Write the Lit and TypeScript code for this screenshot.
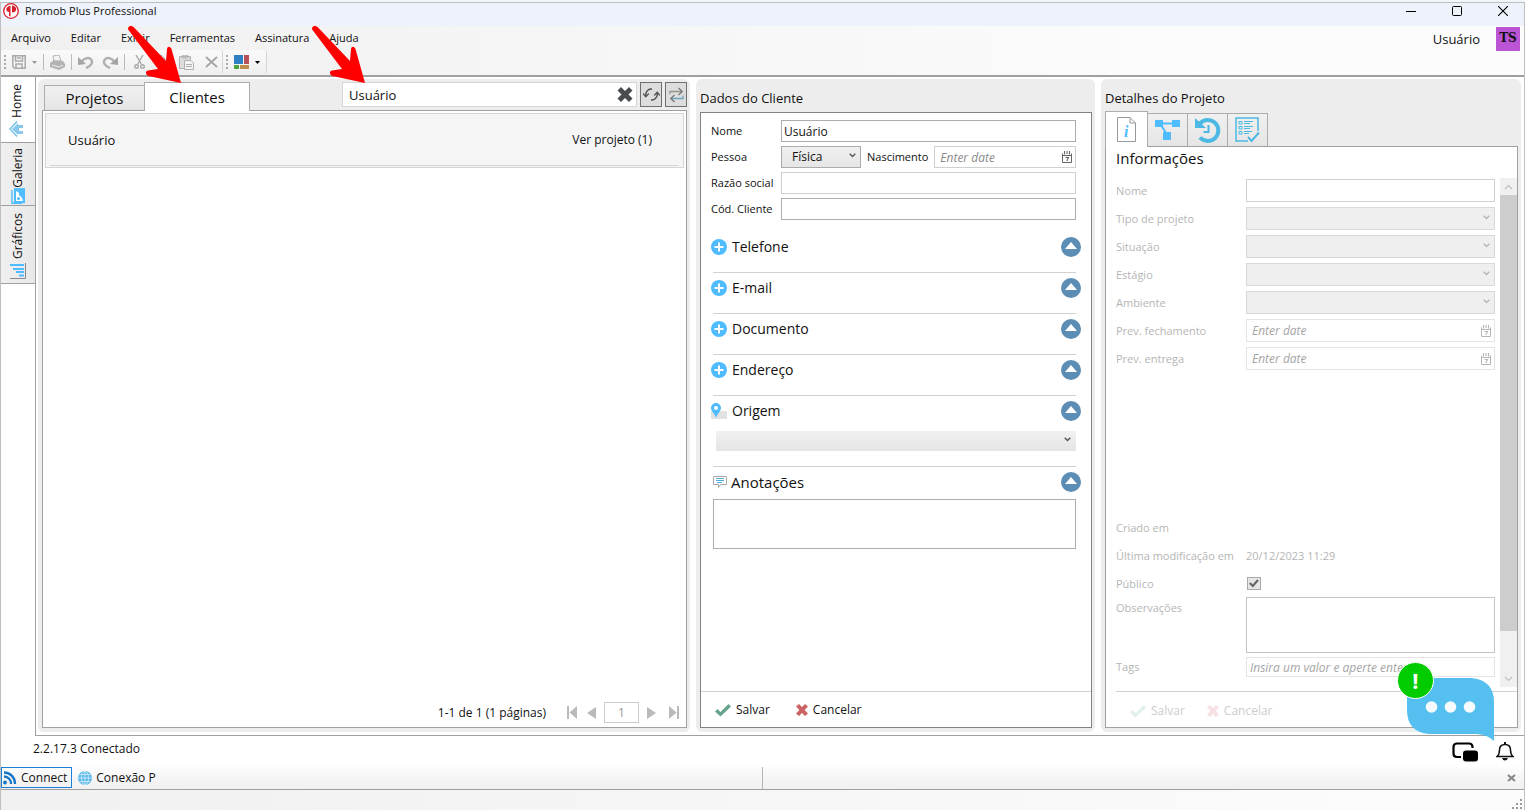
import { LitElement, html, css } from "lit";
import { customElement } from "lit/decorators.js";

const chevron = html`<svg class="chevron" width="7" height="5" viewBox="0 0 7 5"><path d="M.7.8 3.5 3.6 6.3.8" fill="none" stroke="currentColor" stroke-width="1.4"/></svg>`;

const calendar = html`<svg class="calendar" width="10" height="12" viewBox="0 0 10 12" fill="none" stroke="currentColor">
  <path d="M.5 2.5V11.5H9.5V2.5M.5 4.5H9.5" stroke-width="1"/><path d="M2.5 0V3.5M5 0V3M7.5 0V3.5M3.5 6.5H6.5L4.8 10" stroke-width="1.1"/></svg>`;

const check = (color: string) => html`<svg width="16" height="14" viewBox="0 0 16 14"><path d="M0 8.5 2.5 6 5.5 9 13.5 1 16 3.5 5.5 13.5Z" fill=${color}/></svg>`;
const cross = (color: string) => html`<svg width="12" height="12" viewBox="0 0 12 12"><path d="M3 0 6 3 9 0 12 2.5 8.6 6 12 9.5 9 12 6 9 3 12 0 9.5 3.4 6 0 2.5Z" fill=${color}/></svg>`;

const sharedStyles = css`
  * { box-sizing: border-box; }
  button, input, textarea, select { font: inherit; color: inherit; margin: 0; border-radius: 0; outline: none; }
  button { border: 0; padding: 0; background: none; display: flex; align-items: center; }
  svg { display: block; flex: none; }
  .field { border: 1px solid #abadb3; background: #fff; height: 22px; width: 100%; min-width: 0; padding: 0 2px; }
  .pale { border-color: #d0d0d0; }
  .overlay { display: grid; align-items: center; min-width: 0; }
  .overlay > * { grid-area: 1 / 1; }
  .overlay > svg { justify-self: end; pointer-events: none; }
  .chevron { margin: 0 5px 3px 0; color: #555; }
  .calendar { margin-right: 4px; color: #666; }
  .date { font-style: italic; padding-left: 5px; }
  ::placeholder { color: #8a8a8a; opacity: 1; }
  .select { appearance: none; border: 1px solid #acacac; height: 22px; width: 100%; padding: 0 10px; background: linear-gradient(#f0f0f0, #e5e5e5); opacity: 1; }
  .frame { border: 1px solid #a0a0a0; background: #fff; flex: 1; min-height: 0; display: flex; flex-direction: column; }
  .title { margin: 0; font-size: 13px; font-weight: 400; line-height: 18px; }
  .actions { display: flex; align-items: center; height: 36px; flex: none; }
  .actions button { gap: 5px; }
  :host { min-width: 0; min-height: 0; display: flex; flex-direction: column; background: #ededed; border-radius: 6px; }
`;

@customElement("clients-panel")
class ClientsPanel extends LitElement {
  static styles = [sharedStyles, css`
    :host { padding: 3px 3px 4px 4px; }
    .top { display: flex; align-items: flex-end; padding-left: 2px; }
    .tab { border: 1px solid #acacac; border-bottom: 0; font-size: 15px; justify-content: center; height: 25px; width: 101px; background: linear-gradient(#f0f0f0, #e5e5e5); }
    .tab.active { background: #fff; height: 29px; width: 106px; margin: 0 0 -1px -1px; position: relative; }
    .search { flex: 1; max-width: 295px; margin-left: auto; margin-bottom: 3px; }
    .search input { height: 25px; border: 1px solid #d5d5d5; background: #fff; padding: 0 6px; font-size: 13px; width: 100%; }
    .search button { justify-self: end; margin-right: 4px; }
    .square { width: 22px; height: 25px; border: 1px solid #707070; background: #ddd; justify-content: center; margin: 0 0 3px 3px; }
    .client { margin: 2px; height: 55px; border: 1px solid #d5d5d5; background: #f5f5f5; padding: 0 4px 1px; display: flex; }
    .inner { flex: 1; display: flex; align-items: center; justify-content: space-between; border-bottom: 1px solid #d5d5d5; padding: 0 27px 0 18px; }
    .name { font-size: 13px; }
    .pager { margin-top: auto; height: 29px; display: flex; align-items: center; justify-content: flex-end; padding-right: 7px; }
    .pager svg { fill: #b8babc; }
    .first { margin-left: 21px; }
    .prev { margin-left: 10px; }
    .page { width: 35px; height: 21px; border: 1px solid #ccc; text-align: center; color: #999; margin: 0 8px; }
    .last { margin-left: 13px; }
  `];
  render() {
    return html`
      <div class="top">
        <button class="tab">Projetos</button><button class="tab active">Clientes</button>
        <div class="search overlay">
          <input aria-label="Buscar cliente" value="Usuário">
          <button aria-label="Limpar"><svg width="16" height="15" viewBox="0 0 16 15"><path d="M4 0 8 4 12 0 15.5 3.5 11.5 7.5 15.5 11.5 12 15 8 11 4 15 .5 11.5 4.5 7.5.5 3.5Z" fill="#4a4d50"/></svg></button>
        </div>
        <button class="square" aria-label="Atualizar"><svg width="17" height="15" viewBox="0 0 17 15" fill="none" stroke="#505050" stroke-width="1.5"><path d="M2.8 9V7A5.3 5.3 0 0 1 9 2.2M14.2 6V8A5.3 5.3 0 0 1 8 12.8"/><path d="M0 6.5 2.8 9.8 5.8 6.5M11.2 8.5 14.2 5.2 17 8.5" stroke-width="1.2"/></svg></button>
        <button class="square" aria-label="Alternar"><svg width="15" height="16" viewBox="0 0 15 16" fill="none" stroke-width="1.3"><path d="M1 7V4.5H13" stroke="#9a958a"/><path d="M9.5 1 13.2 4.5 9.5 8" stroke="#777"/><path d="M14 8.5V11.5H2" stroke="#6fa3c4"/><path d="M5.5 8 1.8 11.5 5.5 15" stroke="#777"/></svg></button>
      </div>
      <div class="frame">
        <div class="client"><div class="inner"><span class="name">Usuário</span><button>Ver projeto (1)</button></div></div>
        <div class="pager">
          <span>1-1 de 1 (1 páginas)</span>
          <button class="first" aria-label="Primeira"><svg width="10" height="13"><path d="M0 0H2V13H0ZM10 0V13L2.5 6.5Z"/></svg></button>
          <button class="prev" aria-label="Anterior"><svg width="9" height="12"><path d="M9 0V12L0 6Z"/></svg></button>
          <input class="page" aria-label="Página" value="1">
          <button aria-label="Próxima"><svg width="9" height="12"><path d="M0 0V12L9 6Z"/></svg></button>
          <button class="last" aria-label="Última"><svg width="10" height="13"><path d="M8 0H10V13H8ZM0 0V13L7.5 6.5Z"/></svg></button>
        </div>
      </div>`;
  }
}

@customElement("client-form")
class ClientForm extends LitElement {
  static styles = [sharedStyles, css`
    :host { padding: 10px 3px 4px 4px; }
    .frame { margin-top: 5px; border-color: #828282; }
    .form { padding: 7px 15px 0 10px; display: grid; grid-template-columns: 70px 1fr; row-gap: 4px; align-items: center; }
    .form label { white-space: nowrap; font-size: 11px; line-height: 18px; }
    .line { display: grid; grid-template-columns: 80px auto 1fr; align-items: center; column-gap: 6px; }
    .sections { padding-top: 17px; flex: 1; }
    .head { display: flex; align-items: center; gap: 5px; height: 20px; margin: 0 10px; font-size: 14px; }
    .head .label { flex: 1; }
    .rule { border: 0; border-top: 1px solid #d0d0d0; margin: 15px 15px 5px 12px; }
    .origin { margin: 10px 15px 0; }
    .origin .select { height: 20px; border: 0; }
    .notes { font-size: 15px; margin-left: 12px; gap: 4px; }
    .area { display: block; resize: none; height: 50px; border: 1px solid #abadb3; width: calc(100% - 27px); margin: 7px 15px 0 12px; }
    .actions { border-top: 1px solid #d0d0d0; padding-left: 14px; gap: 26px; }
  `];
  private collapse = html`<button aria-label="Recolher"><svg width="20" height="20"><circle cx="10" cy="10" r="10" fill="#5b8db5"/><path d="M10 5 16 12H4Z" fill="#fff"/></svg></button>`;
  private plus = html`<svg width="16" height="16"><circle cx="8" cy="8" r="8" fill="#4ebcff"/><path d="M8 3.5V12.5M3.5 8H12.5" stroke="#fff" stroke-width="2"/></svg>`;
  render() {
    return html`
      <h2 class="title">Dados do Cliente</h2>
      <div class="frame">
        <div class="form">
          <label for="name">Nome</label><input id="name" class="field" value="Usuário">
          <label for="person">Pessoa</label>
          <div class="line">
            <div class="overlay"><select id="person" class="select"><option>Física</option></select>${chevron}</div>
            <label for="birth">Nascimento</label>
            <div class="overlay"><input id="birth" class="field pale date" placeholder="Enter date">${calendar}</div>
          </div>
          <label for="company">Razão social</label><input id="company" class="field pale">
          <label for="code">Cód. Cliente</label><input id="code" class="field">
        </div>
        <div class="sections">
          ${["Telefone", "E-mail", "Documento", "Endereço"].map((name) => html`
            <div class="head">${this.plus}<span class="label">${name}</span>${this.collapse}</div>
            <hr class="rule">`)}
          <div class="head">
            <svg width="16" height="16"><path d="M0 8H16V16H0Z" fill="#e2e2e2"/><path d="M5 15C4 11 0 8 0 5A5 5 0 0 1 10 5C10 8 6 11 5 15Z" fill="#4ebcff"/><circle cx="5" cy="5" r="2" fill="#fff"/></svg>
            <label class="label" for="origin">Origem</label>${this.collapse}
          </div>
          <div class="origin overlay"><select id="origin" class="select"></select>${chevron}</div>
          <hr class="rule">
          <div class="head notes">
            <svg width="14" height="12" fill="none"><path d="M.5.5H13.5V8.5H7.5L5.5 11.5V8.5H.5Z" stroke="#aaa"/><path d="M3 2.5H11M3 4.5H11M4 6.5H9" stroke="#4eaee6"/></svg>
            <label class="label" for="notes">Anotações</label>${this.collapse}
          </div>
          <textarea id="notes" class="area"></textarea>
        </div>
        <div class="actions">
          <button>${check("#65a48a")}Salvar</button>
          <button>${cross("#cc6464")}Cancelar</button>
        </div>
      </div>`;
  }
}

@customElement("project-details")
class ProjectDetails extends LitElement {
  static styles = [sharedStyles, css`
    :host { padding: 10px 3px 4px 4px; }
    .tabs { display: flex; align-items: flex-end; margin-top: 4px; }
    .tab { width: 41px; height: 33px; margin-left: -1px; justify-content: center; border: 1px solid #acacac; border-bottom: 0; background: linear-gradient(#f0f0f0, #e5e5e5); }
    .tab.active { width: 43px; height: 36px; background: #fff; margin: 0 0 -1px; position: relative; }
    .glyph { font: italic bold 16px "Liberation Serif", serif; fill: #4ebcff; }
    .heading { font-size: 15px; font-weight: 400; line-height: 20px; margin: 1px 0 10px 10px; }
    .body { flex: 1; min-height: 0; display: flex; overflow: hidden; margin-bottom: 4px; }
    .fields { flex: 1; min-width: 0; padding: 1px 5px 0 10px; display: flex; flex-direction: column; gap: 5px; color: #b5b5b5; }
    .row { display: grid; grid-template-columns: 130px 1fr; align-items: center; height: 23px; flex: none; }
    .row label, .row span { font-size: 11px; line-height: 18px; }
    .row .field, .row .select { height: 23px; border-color: #d0d0d0; color: #b9b9b9; }
    .row .select { background: #efefef; border-color: #d9d9d9; }
    .row .date { border-color: #e4e4e4; }
    .row ::placeholder { color: #a5a5a5; }
    .row .chevron, .row .calendar { color: #b5b5b5; }
    .later { margin-top: auto; }
    .tall { height: 56px; align-items: start; margin-top: -3px; }
    .tall label { padding-top: 2px; }
    .tall textarea { height: 56px; width: 100%; resize: none; border: 1px solid #c4c4c4; background: #fff; }
    .tags { height: 20px; margin: -1px 0 10px; }
    .row.tags .field { height: 20px; border-color: #e4e4e4; font-style: italic; padding-left: 3px; }
    .box { appearance: none; width: 14px; height: 13px; border: 1px solid #aaa; background: #e6e6e6; margin: 0; }
    .check { margin-left: 1px; display: grid; align-items: center; justify-content: start; }
    .check > * { grid-area: 1 / 1; }
    .check svg { margin-left: 2px; pointer-events: none; }
    .scroll { width: 17px; background: #f0f0f0; display: flex; flex-direction: column; align-items: center; }
    .scroll button { height: 17px; color: #c0c0c0; }
    .thumb { width: 100%; flex: 1; background: #cdcdcd; margin-bottom: 39px; }
    .actions { border-top: 1px solid #d0d0d0; margin-left: 10px; padding: 2px 0 0 14px; gap: 22px; color: #cdcdcd; }
  `];
  private choice(id: string, label: string) {
    return html`<div class="row"><label for=${id}>${label}</label><div class="overlay"><select id=${id} class="select" disabled></select>${chevron}</div></div>`;
  }
  private date(id: string, label: string) {
    return html`<div class="row"><label for=${id}>${label}</label><div class="overlay"><input id=${id} class="field date" placeholder="Enter date" disabled>${calendar}</div></div>`;
  }
  render() {
    const arrow = (d: string) => html`<svg width="9" height="6" viewBox="0 0 9 6"><path d=${d} fill="none" stroke="currentColor" stroke-width="1.2"/></svg>`;
    return html`
      <h2 class="title">Detalhes do Projeto</h2>
      <div class="tabs">
        <button class="tab active" aria-label="Informações"><svg width="19" height="25" fill="none"><path d="M.5.5H13L18.5 6V24.5H.5ZM13 .5V6H18.5" stroke="#999"/><text class="glyph" x="7" y="20">i</text></svg></button>
        <button class="tab" aria-label="Ambientes"><svg width="25" height="20"><path d="M0 0H8V7H0ZM17 0H25V7H17ZM8 12H16V20H8Z" fill="#4ebcff"/><path d="M7 3.5H18M6 5 11 13" stroke="#4ebcff" stroke-width="2"/></svg></button>
        <button class="tab" aria-label="Histórico"><svg width="26" height="26" viewBox="0 0 26 26" fill="none"><path d="M4.5 7A10.5 10.5 0 1 1 5 20.5" stroke="#4bb9e3" stroke-width="4"/><path d="M0 1V11H11Z" fill="#4bb9e3"/><path d="M13.5 8V15H8.5" stroke="#4bb9e3" stroke-width="2"/></svg></button>
        <button class="tab" aria-label="Tarefas"><svg width="25" height="26" fill="none" stroke="#4bb9e3"><path d="M13 24H1V1H23V14" stroke-width="1.5"/><path d="M4 4.5H7V7H4ZM4 9.5H7V12H4ZM4 14.5H7V17H4ZM9 4.5H18M9 6.5H15M9 9.5H18M9 11.5H15M9 14.5H17M9 16.5H14"/><path d="M13 20 16.5 24 24 15.5" stroke-width="2"/></svg></button>
      </div>
      <div class="frame">
        <h3 class="heading">Informações</h3>
        <div class="body">
          <div class="fields">
            <div class="row"><label for="pname">Nome</label><input id="pname" class="field" disabled></div>
            ${this.choice("type", "Tipo de projeto")}${this.choice("status", "Situação")}${this.choice("stage", "Estágio")}${this.choice("room", "Ambiente")}
            ${this.date("closing", "Prev. fechamento")}${this.date("delivery", "Prev. entrega")}
            <div class="row later"><span>Criado em</span></div>
            <div class="row"><span>Última modificação em</span><span>20/12/2023 11:29</span></div>
            <div class="row"><label for="public">Público</label><div class="check"><input id="public" class="box" type="checkbox" checked disabled><svg width="10" height="9"><path d="M.8 4 3.8 7 9 1" fill="none" stroke="#666" stroke-width="2.2"/></svg></div></div>
            <div class="row tall"><label for="obs">Observações</label><textarea id="obs" disabled></textarea></div>
            <div class="row tags"><label for="tags">Tags</label><input id="tags" class="field" placeholder="Insira um valor e aperte enter" disabled></div>
          </div>
          <div class="scroll">
            <button aria-label="Subir">${arrow("M1 5 4.5 1.5 8 5")}</button><div class="thumb"></div><button aria-label="Descer">${arrow("M1 1 4.5 4.5 8 1")}</button>
          </div>
        </div>
        <div class="actions">
          <button disabled>${check("#e3f0eb")}Salvar</button>
          <button disabled>${cross("#f6e2e2")}Cancelar</button>
        </div>
      </div>`;
  }
}

const arrowPath = "M1 .5C3-.8 5 .3 6.5 2L38 35 39 23C39.5 20 42 20 43.5 23L53 57 20.500 50C17.500 49 17 45 20 44.500L30 43 .5 4C-.3 2.700 0 1.300 1 .5Z";

@customElement("app-root")
class AppRoot extends LitElement {
  static styles = [sharedStyles, css`
    :host { display: flex; flex-direction: column; height: 100vh; background: #f2f5f9; padding-top: 2px; border-radius: 0; font: 12px/16px "Open Sans", "Noto Sans", sans-serif; color: #111; position: relative; }
    .window { flex: 1; min-height: 0; display: flex; flex-direction: column; border: 1px solid #bfbfbf; background: #fff; }
    .titlebar { height: 23px; background: #eef2fa; display: flex; align-items: center; padding: 0 16px 8px 2px; gap: 6px; flex: none; }
    .titlebar .name { flex: 1; font-size: 11px; }
    .titlebar .controls { display: flex; gap: 36px; }
    .bars { flex: none; display: flex; justify-content: space-between; border-bottom: 2px solid #a0a0a0; background: linear-gradient(90deg, #f0f0f0, #fcfcfc 80%); height: 51px; }
    .menu { display: flex; height: 24px; align-items: center; padding-left: 10px; gap: 20px; font-size: 11px; }
    .tools { display: flex; align-items: center; height: 24px; color: #a9a9a9; }
    .group { display: flex; align-items: center; height: 24px; padding: 0 6px 0 3px; border-radius: 3px; background: linear-gradient(#fafafa, #efefef); border-right: 1px solid #d5d5d5; gap: 6px; }
    .group:first-child { padding-right: 3px; }
    .set { display: flex; align-items: center; gap: 8px; }
    .set button { min-width: 16px; justify-content: center; }
    .user { display: flex; gap: 16px; padding: 1px 4px; font-size: 13px; line-height: 24px; }
    .avatar { width: 24px; height: 24px; background: #bb55d6; font: bold 12px/22px "DejaVu Serif", serif; text-align: center; }
    .main { flex: 1; min-height: 0; display: grid; grid-template-columns: 34px 1fr; }
    .side { display: flex; flex-direction: column; }
    .side button { flex-direction: column; justify-content: space-between; border: 1px solid #a0a0a0; border-left: 0; background: linear-gradient(90deg, #f0f0f0, #e8e8e8); padding: 5px 0 2px; height: 64px; width: 35px; margin-bottom: -1px; font-size: 12px; }
    .side button.active { border: 0; background: #fff; height: 66px; padding: 7px 4px 6px 0; }
    .side button.long { height: 79px; padding: 7px 0 4px; }
    .side span { writing-mode: vertical-rl; transform: rotate(180deg); }
    .workspace { min-height: 0; border: 1px solid #a0a0a0; border-top: 0; border-right: 0; padding: 2px 3px 3px 2px; display: grid; grid-template-columns: 652fr 399fr 420fr; grid-template-rows: 100%; gap: 6px; }
    .status { height: 31px; flex: none; display: flex; align-items: center; justify-content: space-between; padding: 0 10px 6px 32px; }
    .status .icons { display: flex; gap: 18px; padding-top: 6px; align-items: center; }
    .docks { display: grid; grid-template-columns: 1fr 1fr; height: 23px; flex: none; background: linear-gradient(#fcfcfc, #f0f0f0); border-bottom: 1px solid #a0a0a0; }
    .dock { display: flex; align-items: center; padding-right: 8px; }
    .dock:first-child { border-right: 1px solid #b5b5b5; align-items: flex-start; }
    .dock:last-child { justify-content: flex-end; }
    .connect, .web { height: 21px; }
    .connect { border: 1px solid #1a7fd6; padding: 0 4px 0 1px; gap: 4px; }
    .web { gap: 4px; padding-left: 6px; }
    .foot { flex: none; height: 21px; background: linear-gradient(90deg, #f0f0f0, #fcfcfc 95%); display: flex; justify-content: flex-end; align-items: flex-end; padding: 1px; }
    .pointer { position: absolute; top: 26px; pointer-events: none; }
    .p1 { left: 128px; }
    .p2 { left: 312px; }
    .chat { position: absolute; right: 30px; bottom: 70px; }
    .bang { font: bold 22px "Open Sans", sans-serif; fill: #fff; text-anchor: middle; }
  `];
  private sep = html`<svg width="1" height="16"><path d="M.5 0V16" stroke="#bbb"/></svg>`;
  private grip = html`<svg width="2" height="15" fill="#aaa"><path d="M0 0H2V2H0ZM0 4H2V6H0ZM0 8H2V10H0ZM0 12H2V14H0Z"/></svg>`;
  render() {
    return html`
      <div class="window">
        <header class="titlebar">
          <svg width="16" height="16" viewBox="0 0 16 16"><circle cx="8" cy="8" r="7.3" fill="#fff" stroke="#d71f2b" stroke-width="1.3"/><path d="M7.5 2.5V13.5L6 13V9L3.5 8V5Q5 3 7.5 2.5ZM9 2.5Q13 3 13.3 6.5 12.5 9.5 9 9.5Z" fill="#d71f2b"/></svg>
          <span class="name">Promob Plus Professional</span>
          <div class="controls">
            <button aria-label="Minimizar"><svg width="10" height="10"><path d="M0 5.5H10" stroke="#000"/></svg></button>
            <button aria-label="Maximizar"><svg width="10" height="10"><rect x=".5" y=".5" width="9" height="9" rx="1" fill="none" stroke="#000"/></svg></button>
            <button aria-label="Fechar"><svg width="10" height="10"><path d="M0 0 10 10M10 0 0 10" stroke="#000" stroke-width="1.1"/></svg></button>
          </div>
        </header>
        <div class="bars">
          <div>
            <nav class="menu">${["Arquivo", "Editar", "Exibir", "Ferramentas", "Assinatura", "Ajuda"].map((item) => html`<button>${item}</button>`)}</nav>
            <div class="tools">
              <div class="group">
                ${this.grip}
                <button aria-label="Salvar"><svg width="14" height="14" fill="none" stroke="#a9a9a9" stroke-width="1.5"><path d="M.8.8H13.2V13.2H2.5L.8 11.5Z"/><path d="M3.5 1V6H10.5V1M4 13V9H10V13M5 3H9"/></svg></button>
                <svg width="5" height="3"><path d="M0 0H5L2.5 3Z" fill="#999"/></svg>
                ${this.sep}
                <button aria-label="Imprimir"><svg width="15" height="15" viewBox="0 0 15 15"><path d="M3 1 9 0 11 6 4 7Z" fill="#f5f5f5" stroke="#b5b5b5"/><path d="M0 8 4 5 13 6 15 9V12L9 15 0 12Z" fill="#b3b3b3"/><path d="M2 10 9 12 13 10" stroke="#eee" fill="none"/></svg></button>
                ${this.sep}
                <div class="set">
                  <button aria-label="Desfazer"><svg width="16" height="13" fill="none"><path d="M3 7C6 1 12 1 13.5 4 15 7 13 10 8 12" stroke="#b0b0b0" stroke-width="2.5"/><path d="M0 1V9L8 8Z" fill="#a5a5a5"/></svg></button>
                  <button aria-label="Refazer"><svg width="16" height="13" fill="none"><path d="M13 7C10 1 4 1 2.5 4 1 7 3 10 8 12" stroke="#b0b0b0" stroke-width="2.5"/><path d="M16 1V9L8 8Z" fill="#a5a5a5"/></svg></button>
                </div>
                ${this.sep}
                <div class="set">
                  <button aria-label="Recortar"><svg width="11" height="14" fill="none" stroke="#a9a9a9" stroke-width="1.4"><path d="M2 0 7.5 9.5M9 0 3.5 9.5"/><circle cx="2.5" cy="11.5" r="1.8"/><circle cx="8.5" cy="11.5" r="1.8"/></svg></button>
                  <button aria-label="Copiar"><svg width="16" height="15" fill="#eee" stroke="#b5b5b5"><path d="M.5.5H7L9.5 3V10.5H.5Z"/><path d="M6.5 4.5H12L15.5 8V14.5H6.5Z"/></svg></button>
                  <button aria-label="Colar"><svg width="16" height="15" fill="#ddd" stroke="#b0b0b0"><path d="M.5 1.5H11.5V13.5H.5ZM3.5 0H8.5V3H3.5Z"/><path d="M5.5 5.5H12L14.5 8V14.5H5.5ZM7 9.5H13M7 11.5H13" fill="#f3f3f3"/></svg></button>
                  <button aria-label="Excluir"><svg width="13" height="12"><path d="M1 1 12 11M12 1 1 11" stroke="#a5a5a5" stroke-width="1.8"/></svg></button>
                </div>
              </div>
              <div class="group">
                ${this.grip}
                <button aria-label="Layout"><svg width="15" height="14"><path d="M0 0H9V9H0Z" fill="#2f7fc2"/><path d="M10 0H15V9H10Z" fill="#b8505a"/><path d="M0 10H5V14H0Z" fill="#4aa53f"/><path d="M6 10H15V14H6Z" fill="#bb8c4a"/></svg></button>
                <svg width="5" height="3"><path d="M0 0H5L2.5 3Z" fill="#000"/></svg>
              </div>
            </div>
          </div>
          <div class="user"><span>Usuário</span><div class="avatar">TS</div></div>
        </div>
        <div class="main">
          <nav class="side">
            <button class="active"><span>Home</span><svg width="15" height="16" fill="none"><path d="M8 .5 1 8 8 15.5" stroke="#7cc4ea" stroke-width="1.6"/><path d="M3 8 9 2V4H14V7H10V10H14V13H9V14Z" fill="#8ac8ea"/></svg></button>
            <button><span>Galeria</span><svg width="14" height="16"><rect x="3.5" y=".7" width="10" height="14" fill="#4ebcff" stroke="#4ebcff"/><path d="M1 2V15.3H11" fill="none" stroke="#4ebcff" stroke-width="1.4"/><path d="M5 3Q9 4 8 7.5 11 8 12 13H5Z" fill="#fff"/><circle cx="7.5" cy="10.5" r="1.5" fill="#4ebcff"/></svg></button>
            <button class="long"><span>Gráficos</span><svg width="16" height="16"><path d="M0 1H14V3H0ZM3 5H14V7H3ZM6 8H14V10H6ZM9 11.5H14V13.5H9Z" fill="#4ebcff"/><path d="M15.5 0V15.5H0" fill="none" stroke="#888"/></svg></button>
          </nav>
          <div class="workspace"><clients-panel></clients-panel><client-form></client-form><project-details></project-details></div>
        </div>
        <div class="status">
          <span>2.2.17.3 Conectado</span>
          <div class="icons">
            <svg width="26" height="20" fill="none"><path d="M9 15H5Q1.5 15 1.5 11.5V5Q1.5 1.5 5 1.5H17Q20.5 1.5 20.5 5V6" stroke="#000" stroke-width="2.2"/><rect x="11" y="8.5" width="15" height="11" rx="3" fill="#000"/></svg>
            <button aria-label="Notificações"><svg width="18" height="19" fill="none"><path d="M1 14.5Q3.5 12.5 3.5 8 3.5 2.5 9 2.5 14.5 2.5 14.5 8 14.5 12.5 17 14.5Z" stroke="#111" stroke-width="1.5"/><path d="M9 0V2.5" stroke="#111" stroke-width="2"/><path d="M6 16H12Q11 18.5 9 18.5 7 18.5 6 16Z" fill="#111"/></svg></button>
          </div>
        </div>
        <div class="docks">
          <div class="dock">
            <button class="connect"><svg width="14" height="14" fill="none"><circle cx="2" cy="11.5" r="1.9" fill="#1878c8"/><path d="M1 5.5A7 7 0 0 1 8 13M1 1.5A11 11 0 0 1 12 13" stroke="#1878c8" stroke-width="2.3"/></svg>Connect</button>
            <button class="web"><svg width="14" height="14" fill="none"><circle cx="7" cy="7" r="7" fill="#5ab8e8"/><path d="M7 0V14M0 7H14M1.5 3.5H12.5M1.5 10.5H12.5" stroke="#d5effc" stroke-width=".8"/><ellipse cx="7" cy="7" rx="3.5" ry="6.8" stroke="#d5effc" stroke-width=".8"/></svg>Conexão P</button>
          </div>
          <div class="dock"><button aria-label="Fechar painel"><svg width="9" height="8"><path d="M1 1 8 7M8 1 1 7" stroke="#888" stroke-width="2.2"/></svg></button></div>
        </div>
        <footer class="foot"><svg width="11" height="11" fill="#999"><path d="M8 0H10V2H8ZM4 4H6V6H4ZM8 4H10V6H8ZM0 8H2V10H0ZM4 8H6V10H4ZM8 8H10V10H8Z"/></svg></footer>
      </div>
      <svg class="pointer p1" width="54" height="58" fill="#f00"><path d=${arrowPath}/></svg>
      <svg class="pointer p2" width="54" height="58" fill="#f00"><path d=${arrowPath}/></svg>
      <button class="chat" aria-label="Abrir chat"><svg width="98" height="80" viewBox="0 0 98 80">
        <path d="M10 16H74Q97 18 97 40V79Q91 73 80 72H32Q10 70 10 48Z" fill="#55c0f0"/>
        <circle cx="34.5" cy="45" r="5.8" fill="#f7fbfd"/><circle cx="53.5" cy="45" r="5.8" fill="#f7fbfd"/><circle cx="72.5" cy="45" r="5.8" fill="#f7fbfd"/>
        <circle cx="18.5" cy="18.5" r="18" fill="#0c0" stroke="#fff"/><text class="bang" x="18.5" y="27">!</text>
      </svg></button>`;
  }
}
